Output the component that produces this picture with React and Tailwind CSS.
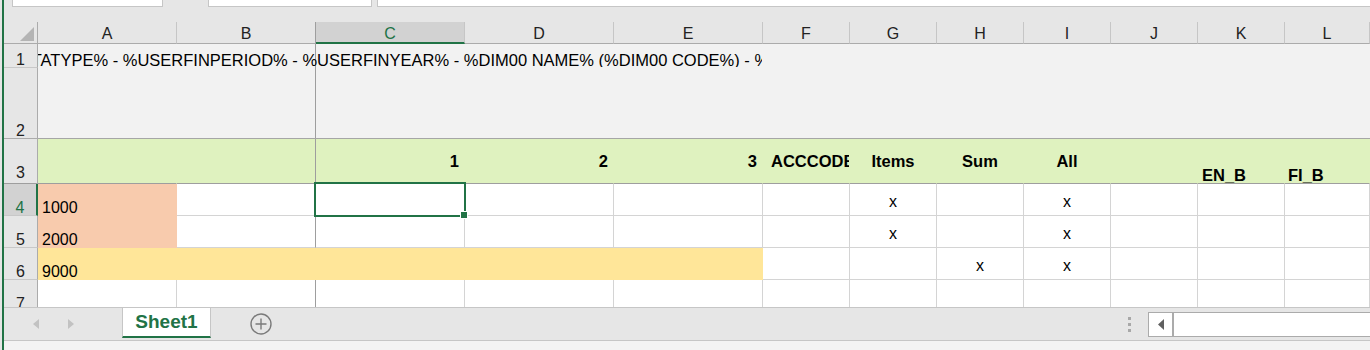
import React from 'react';

const GREEN = 'text-[#217346]';

const COLS = [
  { key: 'A', w: 'w-[139px]' },
  { key: 'B', w: 'w-[139px]' },
  { key: 'C', w: 'w-[149px]' },
  { key: 'D', w: 'w-[149px]' },
  { key: 'E', w: 'w-[149px]' },
  { key: 'F', w: 'w-[87px]' },
  { key: 'G', w: 'w-[87px]' },
  { key: 'H', w: 'w-[87px]' },
  { key: 'I', w: 'w-[87px]' },
  { key: 'J', w: 'w-[87px]' },
  { key: 'K', w: 'w-[87px]' },
  { key: 'L', w: 'flex-1' },
];

// one cell of the sheet; border colours are set per side so fills can hide gridlines
const Cell = ({ w, bg = 'bg-white', r = 'border-r-[#d4d4d4]', b = 'border-b-[#d4d4d4]', align = '', children }) => (
  <div className={`${w} shrink-0 relative flex border-r border-b overflow-visible ${bg} ${r} ${b} ${align}`}>
    {children}
  </div>
);

const RowHead = ({ n, h, active, bottom = 'border-b-[#c8c8c8]', pb = 'pb-0' }) => (
  <div
    className={`w-[34px] shrink-0 ${h} flex items-end justify-center ${pb} border-b ${bottom} ${
      active ? 'bg-[#d2d2d2] border-r-2 border-r-[#217346] text-[#217346]' : 'bg-[#e6e6e6] border-r border-r-[#ababab] text-[#222]'
    }`}
  >
    <span className="leading-[14px]">{n}</span>
  </div>
);

const Mark = () => <div className="flex-1 flex items-center justify-center leading-[18px] pt-[5px]">x</div>;

const Value = ({ v }) => <div className="flex-1 flex items-end pl-[4px] leading-[14px]">{v}</div>;

const B = 'font-bold text-[16.5px]';

const header3 = {
  C: <div className={`flex-1 flex items-center justify-end pr-[5px] pt-[1px] ${B}`}>1</div>,
  D: <div className={`flex-1 flex items-center justify-end pr-[5px] pt-[1px] ${B}`}>2</div>,
  E: <div className={`flex-1 flex items-center justify-end pr-[5px] pt-[1px] ${B}`}>3</div>,
  F: <div className={`flex-1 flex items-center pl-[8px] pt-[1px] overflow-hidden whitespace-nowrap ${B}`}>ACCCODE</div>,
  G: <div className={`flex-1 flex items-center justify-center pt-[1px] ${B}`}>Items</div>,
  H: <div className={`flex-1 flex items-center justify-center pt-[1px] ${B}`}>Sum</div>,
  I: <div className={`flex-1 flex items-center justify-center pt-[1px] ${B}`}>All</div>,
  K: <div className={`flex-1 flex items-end pl-[4px] leading-[16px] ${B}`}>EN_B</div>,
  L: <div className={`flex-1 flex items-end pl-[3px] leading-[16px] ${B}`}>FI_B</div>,
};

const dataRows = [
  { n: 4, active: true, fill: { A: 'salmon' }, value: '1000', marks: ['G', 'I'] },
  { n: 5, fill: { A: 'salmon' }, value: '2000', marks: ['G', 'I'] },
  { n: 6, fill: { A: 'yellow', B: 'yellow', C: 'yellow', D: 'yellow', E: 'yellow' }, value: '9000', marks: ['H', 'I'] },
  { n: 7, fill: {}, value: '', marks: [] },
];

const FILLS = {
  salmon: { bg: 'bg-[#f8cbad]', r: 'border-r-[#f8cbad]', b: 'border-b-[#f8cbad]' },
  yellow: { bg: 'bg-[#ffe699]', r: 'border-r-[#ffe699]', b: 'border-b-[#ffe699]' },
};

const DataRow = ({ row }) => (
  <div className="flex h-[32px] shrink-0">
    <RowHead n={row.n} h="h-[32px]" active={row.active} />
    {COLS.map((c) => {
      const f = FILLS[row.fill[c.key]];
      const props = f ? { ...f } : c.key === 'B' ? { r: 'border-r-[#9e9e9e]' } : {};
      return (
        <Cell key={c.key} w={c.w} {...props}>
          {c.key === 'A' && row.value && <Value v={row.value} />}
          {row.marks.includes(c.key) && <Mark />}
          {row.active && c.key === 'C' && (
            <>
              <div className="absolute -left-[2px] -top-[2px] w-[152px] h-[35px] border-2 border-[#217346] z-10" />
              <div className="absolute left-[144px] top-[27px] w-[8px] h-[8px] bg-[#217346] border border-white z-20" />
            </>
          )}
        </Cell>
      );
    })}
  </div>
);

const Arrow = ({ dir, color, w = 6, h = 10 }) => (
  <svg width={w} height={h} viewBox={`0 0 ${w} ${h}`}>
    {dir === 'left' ? (
      <polygon points={`${w},0 0,${h / 2} ${w},${h}`} fill={color} />
    ) : (
      <polygon points={`0,0 ${w},${h / 2} 0,${h}`} fill={color} />
    )}
  </svg>
);

export default function App() {
  return (
    <div className="w-[1370px] h-[350px] overflow-hidden flex bg-[#e6e6e6] font-['Liberation_Sans',Arial,sans-serif] text-[16px] text-black pl-[2px]">
      <div className="w-[2px] shrink-0 bg-[#217346]" />
      <div className="flex-1 flex flex-col min-w-0">
        {/* formula bar remains */}
        <div className="h-[7px] flex shrink-0">
          <div className="ml-[8px] w-[151px] bg-white border-x border-b border-[#c6c6c6]" />
          <div className="ml-[45px] w-[164px] bg-white border-x border-b border-[#c6c6c6]" />
          <div className="ml-[5px] flex-1 bg-white border-l border-b border-[#c6c6c6]" />
        </div>
        <div className="h-[15px] shrink-0" />

        {/* sheet */}
        <div className="h-[285px] shrink-0 overflow-hidden flex flex-col">
          {/* column headers */}
          <div className="flex h-[22px] shrink-0">
            <div className="w-[34px] shrink-0 relative border-r border-b border-[#ababab]">
              <svg className="absolute left-[16px] top-[5px]" width="14" height="14" viewBox="0 0 14 14">
                <polygon points="0,14 14,0 14,14" fill="#b4b4b4" />
              </svg>
            </div>
            {COLS.map((c) => (
              <div
                key={c.key}
                className={`${c.w} shrink-0 flex items-center justify-center pt-[3px] border-r ${
                  c.key === 'B' ? 'border-r-[#9e9e9e]' : 'border-r-[#c6c6c6]'
                } ${
                  c.key === 'C'
                    ? 'bg-[#d2d2d2] border-b-2 border-b-[#217346] text-[#217346]'
                    : 'border-b border-b-[#ababab] text-[#222]'
                }`}
              >
                <span className="leading-[18px]">{c.key}</span>
              </div>
            ))}
          </div>

          {/* rows 1-2, merged title */}
          <div className="flex h-[95px] shrink-0">
            <div className="w-[34px] shrink-0 flex flex-col">
              <RowHead n={1} h="h-[24px]" />
              <RowHead n={2} h="h-[71px]" bottom="border-b-[#ababab]" />
            </div>
            <div className="flex-1 relative flex bg-[#f2f2f2] border-b border-b-[#a6a6a6]">
              <div className="w-[278px] shrink-0 border-r border-r-[#9e9e9e]" />
              <div className="absolute left-0 top-0 h-[23px] w-[724px] overflow-hidden flex items-end">
                <span className="whitespace-nowrap leading-[14px] text-[16.5px] -ml-[28px]">
                  DATATYPE% - %USERFINPERIOD% - %USERFINYEAR% - %DIM00 NAME% (%DIM00 CODE%) - %DATE%
                </span>
              </div>
            </div>
          </div>

          {/* row 3, green header row */}
          <div className="flex h-[45px] shrink-0">
            <RowHead n={3} h="h-[45px]" bottom="border-b-[#9e9e9e]" pb="pb-[3px]" />
            {COLS.map((c) => (
              <Cell
                key={c.key}
                w={c.w}
                bg="bg-[#dff2bf]"
                r={c.key === 'B' ? 'border-r-[#9e9e9e]' : 'border-r-[#dff2bf]'}
                b="border-b-[#9e9e9e]"
              >
                {header3[c.key]}
              </Cell>
            ))}
          </div>

          {dataRows.map((row) => (
            <DataRow key={row.n} row={row} />
          ))}
        </div>

        {/* sheet tabs */}
        <div className="h-[34px] shrink-0 flex border-t border-b border-[#c6c6c6] bg-[#e6e6e6]">
          <div className="w-[118px] shrink-0 flex items-center">
            <div className="ml-[29px]">
              <Arrow dir="left" color="#c2c2c2" />
            </div>
            <div className="ml-[29px]">
              <Arrow dir="right" color="#c2c2c2" />
            </div>
          </div>
          <div className="w-[89px] h-[30px] shrink-0 flex items-center justify-center bg-white border-x border-[#c6c6c6] border-b-2 border-b-[#217346]">
            <span className={`font-bold text-[19px] leading-[22px] ${GREEN}`}>Sheet1</span>
          </div>
          <div className="ml-[39px] flex items-center">
            <svg width="22" height="22" viewBox="0 0 22 22">
              <circle cx="11" cy="11" r="10" fill="none" stroke="#7a7a7a" strokeWidth="1.4" />
              <path d="M11 5.5v11M5.5 11h11" stroke="#7a7a7a" strokeWidth="1.4" />
            </svg>
          </div>
          <div className="flex-1" />
          <div className="w-[3px] flex flex-col justify-center gap-[3px]">
            <div className="h-[3px] bg-[#a8a8a8]" />
            <div className="h-[3px] bg-[#a8a8a8]" />
            <div className="h-[3px] bg-[#a8a8a8]" />
          </div>
          <div className="w-[17px]" />
          <div className="w-[222px] h-[25px] self-center flex bg-white border-y border-l border-[#ababab]">
            <div className="w-[25px] flex items-center justify-center border-r-2 border-r-[#ababab]">
              <Arrow dir="left" color="#606060" w={6} h={11} />
            </div>
          </div>
        </div>
        <div className="flex-1 bg-[#f3f3f3]" />
      </div>
    </div>
  );
}
